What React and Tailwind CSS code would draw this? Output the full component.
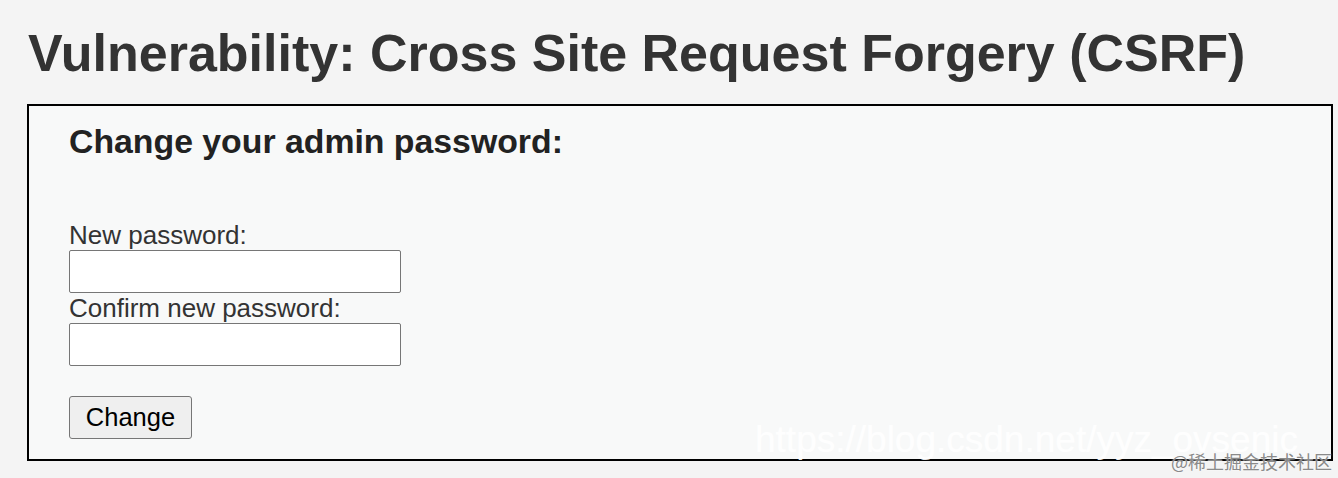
import * as React from "react";

export default function App() {
  return (
    <div className="relative w-[1338px] h-[478px] overflow-hidden bg-[#f4f4f4] font-['Liberation_Sans',Arial,sans-serif] text-[#333]">
      <h1 className="pt-[23px] pl-[28px] text-[52px] leading-[60px] font-bold text-[#333]">
        Vulnerability: Cross Site Request Forgery (CSRF)
      </h1>

      <div className="mt-[21px] ml-[27px] w-[1306px] h-[357px] border-2 border-black bg-[#f8f9f9] pl-[40px] pt-[16px]">
        <h3 className="text-[33.8px] leading-[39px] font-bold text-[#222]">Change your admin password:</h3>

        <form className="mt-[60px] flex flex-col items-start" onSubmit={(e) => e.preventDefault()}>
          <label className="text-[26px] leading-[29px] text-[#333]">New password:</label>
          <input
            type="password"
            className="w-[332px] h-[43px] bg-white border border-[#767676] rounded-[2px] outline-none"
          />
          <label className="mt-px text-[26px] leading-[29px] text-[#333]">Confirm new password:</label>
          <input
            type="password"
            className="w-[332px] h-[43px] bg-white border border-[#767676] rounded-[2px] outline-none"
          />
          <button
            type="submit"
            className="mt-[30px] w-[123px] h-[43px] bg-[#efefef] border border-[#767676] rounded-[3px] text-[25.5px] text-black"
          >
            Change
          </button>
        </form>
      </div>

      {/* watermarks */}
      <div className="absolute left-[755px] top-[418px] text-[37px] leading-[44px] text-white/90 whitespace-nowrap pointer-events-none">
        https://blog.csdn.net/yyz_ovsenic
      </div>
      <div className="absolute left-[1171px] top-[450px] text-[18px] leading-[22px] text-[#8a8a8a] whitespace-nowrap font-['Noto_Sans_CJK_SC',sans-serif] pointer-events-none [text-shadow:0_0_2px_#fff]">
        @稀土掘金技术社区
      </div>
    </div>
  );
}
